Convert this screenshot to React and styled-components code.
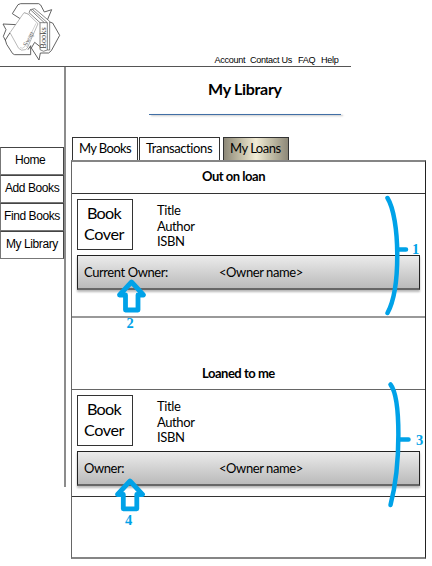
import React from 'react';
import styled, { createGlobalStyle } from 'styled-components';

const Global = createGlobalStyle`
  *, *::before, *::after { box-sizing: border-box; }
  body { margin: 0; background: #fff; color: #000; overflow: hidden; font-family: Lato, Carlito, Calibri, sans-serif; font-variant-ligatures: none; }
`;

const Page = styled.div`
  position: relative;
  width: 432px;
  height: 566px;
  background: #fff;
`;

const Header = styled.header`
  display: flex;
  justify-content: space-between;
  align-items: flex-end;
  width: 351px;
  height: 67px;
  padding: 0 12px 1px 0;
  border-bottom: 1px solid #555;
`;

const Logo = styled.svg`
  width: 64px;
  height: 64px;
  align-self: flex-start;
`;

const TopNav = styled.nav`
  display: flex;
  gap: 5.5px;
  font: 9.1px/10px "Liberation Sans", Arial, sans-serif;
  letter-spacing: -0.3px;
  white-space: nowrap;
`;

const TopLink = styled.span`
  width: ${(p) => p.$width}px;
`;

const Body = styled.div`
  display: flex;
`;

const Sidebar = styled.aside`
  width: 66px;
  height: 420px;
  padding-top: 80px;
  border-right: 2px solid #8c8c8c;
`;

const SideItem = styled.div`
  width: 64px;
  height: 28px;
  border: 1px solid #444;
  border-left-color: #777;
  border-bottom-color: #777;
  padding-left: ${(p) => p.$inset}px;
  font: 12px/25px "Liberation Sans", Arial, sans-serif;
  letter-spacing: -0.42px;
  white-space: nowrap;
`;

const Main = styled.main`
  width: 355px;
  margin-left: 5px;
`;

const Title = styled.h1`
  margin: 0;
  height: 47px;
  padding: 11px 0 0 137px;
  font-size: 16px;
  line-height: 22px;
  font-weight: 700;
  letter-spacing: -0.3px;
  white-space: nowrap;
`;

const Rule = styled.div`
  width: 192px;
  height: 1px;
  margin-left: 78px;
  background: #416fa6;
  box-shadow: 2px 1px 2px rgba(0, 0, 0, 0.3);
`;

const Tabs = styled.div`
  display: flex;
  height: 45px;
  padding: 22px 0 0 1px;
`;

const Tab = styled.div`
  width: ${(p) => p.$width}px;
  height: 23px;
  margin-right: ${(p) => p.$gap}px;
  padding-left: 6px;
  border: 1px solid #333;
  border-bottom: 0;
  background: ${(p) => (p.$active ? 'linear-gradient(90deg, #8d8878 0%, #bab59f 22%, #f2ecd5 50%, #c9c4ad 70%, #8d8878 100%)' : '#fff')};
  font-size: 13px;
  line-height: 21px;
  letter-spacing: ${(p) => p.$tracking}px;
  white-space: nowrap;
`;

const Panel = styled.section`
  height: 399px;
  border: 1px solid #222;
  border-top: 2px solid #858585;
  border-left: 1px solid #666;
  border-bottom: 2px solid #858585;
`;

const Section = styled.div`
  height: ${(p) => p.$height}px;
`;

const SectionHead = styled.h2`
  margin: 0;
  height: ${(p) => p.$height}px;
  padding: ${(p) => p.$top}px 0 0 130px;
  font-size: 13px;
  line-height: 18px;
  font-weight: 700;
  letter-spacing: -0.48px;
  white-space: nowrap;
`;

const Loan = styled.div`
  height: ${(p) => p.$height}px;
  padding: 5px 5px 0;
  border-top: 1px solid ${(p) => p.$top};
  border-bottom: ${(p) => p.$bottom};
`;

const Book = styled.div`
  display: flex;
  height: 51px;
`;

const Cover = styled.div`
  width: 56px;
  height: 51px;
  padding: 3px 2px 0 0;
  border: 1px solid #333;
  text-align: center;
  font-size: 16.2px;
  line-height: 20.5px;
`;

const Word = styled.div`
  letter-spacing: ${(p) => p.$tracking}px;
`;

const Details = styled.div`
  margin-left: 24px;
  padding-top: 4px;
  font-size: 13px;
  line-height: 15.7px;
  letter-spacing: -0.4px;
`;

const Bar = styled.div`
  display: flex;
  width: 343px;
  height: 35px;
  margin-top: 5px;
  padding-left: 6px;
  border: 1px solid #222;
  border-bottom: 2px solid #666;
  background: linear-gradient(#ebebeb, #bababa);
  box-shadow: 0 2px 2px rgba(0, 0, 0, 0.28);
  font-size: 13px;
  line-height: 32px;
  letter-spacing: -0.42px;
  white-space: nowrap;
`;

const BarText = styled.span`
  width: ${(p) => p.$width}px;
`;

const Marks = styled.svg`
  position: absolute;
  left: 0;
  top: 0;
  width: 432px;
  height: 566px;
  pointer-events: none;
`;

const Mark = styled.span`
  position: absolute;
  left: ${(p) => p.$x}px;
  top: ${(p) => p.$y}px;
  color: #00a2e8;
  font: bold 14.5px/16px "Liberation Serif", "Times New Roman", serif;
`;

function LogoMark() {
  return (
    <Logo viewBox="0 0 192 192" fill="none" stroke="#4a4a4a" strokeWidth="2.6" strokeLinejoin="round">
      <path d="M62 57 L37 41 L54 14 L62 11 H116 L122 15 L133 36 L155 29 L142 60 L134 54" />
      <path d="M149 66 L158 69 L179 106 L154 152 L146 159 L121 159 L117 180 L94 144 L104 127 L119 139" />
      <path d="M30 98 L16 120 L20 133 L38 161 L44 164 H92 V137 L84 149" />
      <path d="M62 57 L50 74 L9 72 L18 89 L10 109 L16 121" />
      <path d="M72 38 L30 98 L56 145 Q63 154 76 149 L82 144 L114 71 L84 42 Z" stroke="#8a8a8a" strokeWidth="1.8" fill="#fff" />
      <path d="M73 38 L88 43 M108 70 L75 139 Q68 148 60 143" stroke="#aaa" strokeWidth="1.6" />
      <path d="M120 68 H142 V150 Q130 158 120 149 Z M120 68 L87 38 L91 29 L104 26 L149 64 V150 H142 M91 29 L133 68 M97 28 L142 68" strokeWidth="2" fill="#fff" />
      <text transform="translate(137 146) rotate(-90)" fontFamily="Liberation Serif, serif" fontSize="25" fill="#444" stroke="none">Books</text>
      <text transform="translate(80 141) rotate(-62)" fontFamily="Liberation Serif, serif" fontSize="21" fill="#777" stroke="none">Swap</text>
    </Logo>
  );
}

function LoanCard({ owner, height, top, bottom }) {
  return (
    <Loan $height={height} $top={top} $bottom={bottom}>
      <Book>
        <Cover>
          <Word $tracking={-0.7}>Book</Word>
          <Word $tracking={-0.4}>Cover</Word>
        </Cover>
        <Details>
          <div>Title</div>
          <div>Author</div>
          <div>ISBN</div>
        </Details>
      </Book>
      <Bar>
        <BarText $width={135}>{owner}</BarText>
        <BarText $width={90}>&lt;Owner name&gt;</BarText>
      </Bar>
    </Loan>
  );
}

export default function App() {
  return (
    <>
      <Global />
      <Page>
        <Header>
          <LogoMark />
          <TopNav>
            <TopLink $width={30}>Account</TopLink>
            <TopLink $width={42.5}>Contact Us</TopLink>
            <TopLink $width={17.5}>FAQ</TopLink>
            <TopLink $width={18}>Help</TopLink>
          </TopNav>
        </Header>
        <Body>
          <Sidebar>
            <SideItem $inset={14}>Home</SideItem>
            <SideItem $inset={4}>Add Books</SideItem>
            <SideItem $inset={3}>Find Books</SideItem>
            <SideItem $inset={5}>My Library</SideItem>
          </Sidebar>
          <Main>
            <Title>My Library</Title>
            <Rule />
            <Tabs>
              <Tab $width={66} $gap={1} $tracking={-0.6}>My Books</Tab>
              <Tab $width={81} $gap={3} $tracking={-0.4}>Transactions</Tab>
              <Tab $width={66} $gap={0} $tracking={-0.5} $active>My Loans</Tab>
            </Tabs>
            <Panel>
              <Section $height={156}>
                <SectionHead $height={31} $top={5}>Out on loan</SectionHead>
                <LoanCard owner="Current Owner:" height={125} top="#333" bottom="2px solid #999" />
              </Section>
              <Section $height={179}>
                <SectionHead $height={71} $top={46}>Loaned to me</SectionHead>
                <LoanCard owner="Owner:" height={108} top="#666" bottom="1px solid #333" />
              </Section>
            </Panel>
          </Main>
        </Body>
        <Marks viewBox="0 0 432 566" fill="none" stroke="#00a2e8" strokeWidth="4.5">
          <path d="M387.5 198 C400 218 401 288 387.5 313 M398 249.5 H406" strokeLinecap="round" />
          <path d="M390.5 384.5 C401 398 401 465 390.5 505 M399 439.5 H408.5" strokeLinecap="round" />
          <path d="M131.5 282 L143.5 295 H138 V310 H125.5 V295 H119.5 Z" strokeWidth="4.8" strokeLinejoin="round" />
          <path d="M130 481 L142.5 494.5 H136.8 V508.8 H123.3 V494.5 H117.5 Z" strokeWidth="4.8" strokeLinejoin="round" />
        </Marks>
        <Mark $x={412} $y={241}>1</Mark>
        <Mark $x={126.5} $y={315}>2</Mark>
        <Mark $x={416} $y={432}>3</Mark>
        <Mark $x={125} $y={512}>4</Mark>
      </Page>
    </>
  );
}
